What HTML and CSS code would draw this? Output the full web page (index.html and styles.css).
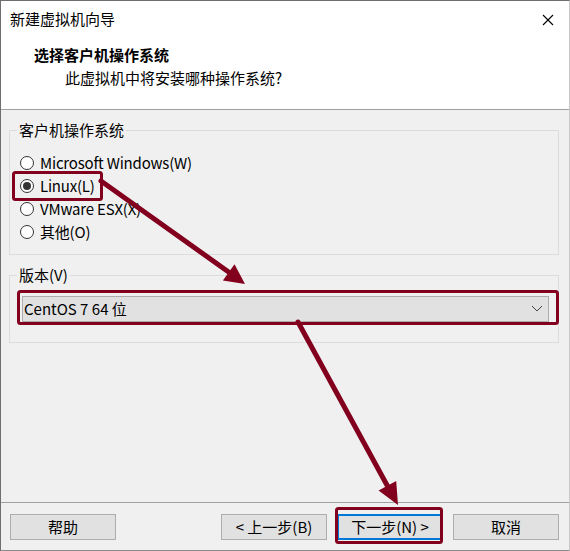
FILE: index.html
```html
<!DOCTYPE html>
<html lang="zh-CN">
<head>
    <meta charset="UTF-8">
    <title>新建虚拟机向导</title>
    <link rel="stylesheet" href="styles.css">
</head>
<body>

    <div class="window">
        <!-- Header -->
        <div class="head">
            <div class="titlebar">
                <span class="title">新建虚拟机向导</span>
                <svg class="close" width="12" height="12" viewBox="0 0 12 12">
                    <path d="M1 1 L11 11 M11 1 L1 11" stroke="#000" stroke-width="1.1" fill="none"/>
                </svg>
            </div>
            <div class="heading">选择客户机操作系统</div>
            <div class="subheading">此虚拟机中将安装哪种操作系统?</div>
        </div>

        <!-- Body -->
        <div class="content">
            <fieldset class="group">
                <legend>客户机操作系统</legend>
                <div class="radio"><span class="dot"></span>Microsoft Windows(W)</div>
                <div class="radio checked"><span class="dot"></span>Linux(L)</div>
                <div class="radio"><span class="dot"></span>VMware ESX(X)</div>
                <div class="radio"><span class="dot"></span>其他(O)</div>
            </fieldset>

            <fieldset class="group version">
                <legend>版本(V)</legend>
                <div class="select">
                    <span>CentOS 7 64 位</span>
                    <svg width="12" height="7" viewBox="0 0 12 7">
                        <path d="M1 1 L6 6 L11 1" stroke="#444" stroke-width="1" fill="none"/>
                    </svg>
                </div>
            </fieldset>
        </div>

        <!-- Footer -->
        <div class="footer">
            <button>帮助</button>
            <div class="spacer"></div>
            <button>&lt; 上一步(B)</button>
            <button class="default">下一步(N) &gt;</button>
            <button>取消</button>
        </div>

        <!-- Annotation overlay -->
        <svg class="marks" width="570" height="551" viewBox="0 0 570 551">
            <g fill="none" stroke="#82001e" stroke-width="3">
                <rect x="13.5" y="172.5" width="88" height="27" rx="2"/>
                <rect x="18.5" y="291.5" width="539" height="32" rx="2"/>
                <rect x="336.5" y="508.5" width="105" height="34" rx="2"/>
            </g>
            <g stroke="#82001e" stroke-width="5" stroke-linecap="round">
                <line x1="101" y1="181" x2="230" y2="273"/>
                <line x1="298" y1="322" x2="388" y2="487"/>
            </g>
            <g fill="#82001e">
                <polygon points="245,284 222.9,280.5 234.5,264.3"/>
                <polygon points="398,505 378.6,490.5 396.2,480.9"/>
            </g>
        </svg>
    </div>

</body>
</html>
```

FILE: styles.css
```css
body {
    margin: 0;
    padding: 0;
    font-family: "Noto Sans CJK SC", "Noto Sans", sans-serif;
    font-size: 15px;
    color: #000;
}

.window {
    position: relative;
    box-sizing: border-box;
    width: 570px;
    height: 551px;
    border: 1px solid #6e6e6e;
    border-right-color: #c8c8c8;
    border-bottom-color: #8a8a8a;
    background-color: #f0f0f0;
    display: flex;
    flex-direction: column;
}

/* Header */
.head {
    background-color: #fff;
    height: 109px;
    box-sizing: border-box;
    border-bottom: 1px solid #a0a0a0;
}

.titlebar {
    height: 36px;
    display: flex;
    align-items: center;
    justify-content: space-between;
    padding: 0 15px 0 9px;
}

.title {
    line-height: 36px;
}

.close {
    margin-top: 2px;
}

.heading {
    font-weight: bold;
    line-height: 20px;
    margin-top: 8px;
    padding-left: 33px;
}

.subheading {
    line-height: 20px;
    margin-top: 3px;
    padding-left: 64px;
}

/* Body */
.content {
    flex: 1;
    padding: 10px 10px 0 8px;
}

.group {
    margin: 0;
    padding: 0 7px 11px 7px;
    border: 1px solid #dcdcdc;
}

.group legend {
    padding: 0 2px;
    line-height: 20px;
}

.radio {
    display: flex;
    align-items: center;
    height: 23px;
    padding-left: 3px;
    letter-spacing: -0.2px;
}

.radio:first-of-type {
    margin-top: 11px;
}

.dot {
    flex-shrink: 0;
    box-sizing: border-box;
    width: 14px;
    height: 14px;
    border: 1px solid #333;
    border-radius: 50%;
    background-color: #fff;
    margin-right: 6px;
    display: flex;
    align-items: center;
    justify-content: center;
}

.radio.checked .dot::after {
    content: "";
    width: 8px;
    height: 8px;
    border-radius: 50%;
    background-color: #333;
}

.version {
    margin-top: 10px;
    padding: 11px 9px 20px 12px;
}

.version legend {
    margin-left: -5px;
}

.select {
    box-sizing: border-box;
    height: 26px;
    border: 1px solid #adadad;
    background-color: #e1e1e1;
    display: flex;
    align-items: center;
    justify-content: space-between;
    padding: 0 5px 1px 1px;
}

/* Footer */
.footer {
    border-top: 1px solid #a0a0a0;
    display: flex;
    gap: 10px;
    padding: 11px 10px 10px 9px;
}

.spacer {
    flex: 1;
}

button {
    box-sizing: border-box;
    width: 106px;
    height: 26px;
    padding: 0 0 1px 0;
    font-family: inherit;
    font-size: 15px;
    color: #000;
    background-color: #e1e1e1;
    border: 1px solid #adadad;
}

button.default {
    border: 2px solid #0078d7;
}

.marks {
    position: absolute;
    top: -1px;
    left: -1px;
    pointer-events: none;
}
```
